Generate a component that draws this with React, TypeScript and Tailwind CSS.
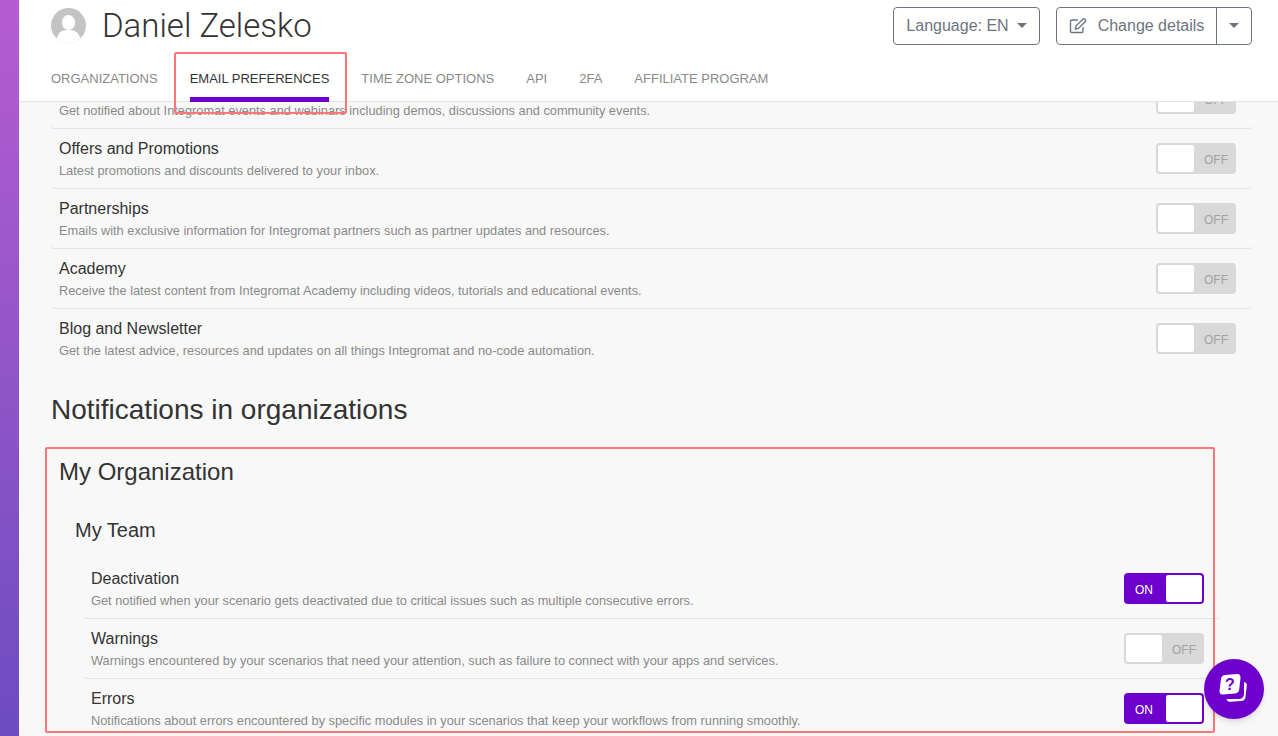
const tabs = ['ORGANIZATIONS', 'EMAIL PREFERENCES', 'TIME ZONE OPTIONS', 'API', '2FA', 'AFFILIATE PROGRAM'];

const generalRows = [
  { title: 'Events and Webinars', text: 'Get notified about Integromat events and webinars including demos, discussions and community events.' },
  { title: 'Offers and Promotions', text: 'Latest promotions and discounts delivered to your inbox.' },
  { title: 'Partnerships', text: 'Emails with exclusive information for Integromat partners such as partner updates and resources.' },
  { title: 'Academy', text: 'Receive the latest content from Integromat Academy including videos, tutorials and educational events.' },
  { title: 'Blog and Newsletter', text: 'Get the latest advice, resources and updates on all things Integromat and no-code automation.' },
];

const teamRows = [
  { title: 'Deactivation', text: 'Get notified when your scenario gets deactivated due to critical issues such as multiple consecutive errors.', on: true },
  { title: 'Warnings', text: 'Warnings encountered by your scenarios that need your attention, such as failure to connect with your apps and services.', on: false },
  { title: 'Errors', text: 'Notifications about errors encountered by specific modules in your scenarios that keep your workflows from running smoothly.', on: true },
];

function Toggle({ on }: { on: boolean }) {
  if (on) {
    return (
      <div className="flex h-[31px] w-[80px] shrink-0 rounded-[4px] border-2 border-[#6d00cc] bg-[#6d00cc]">
        <div className="flex w-[40px] items-center justify-center pr-[4px] pt-[3px] text-[12px] text-white">ON</div>
        <div className="flex-1 rounded-[2px] bg-white" />
      </div>
    );
  }
  return (
    <div className="flex h-[31px] w-[80px] shrink-0 rounded-[4px] border-2 border-[#d9d9d9] bg-[#d9d9d9]">
      <div className="w-[36px] rounded-[2px] bg-white" />
      <div className="flex flex-1 items-center justify-center pl-[4px] pt-[3px] text-[12px] text-[#a3a3a3]">OFF</div>
    </div>
  );
}

function Row({ title, text, on, last }: { title: string; text: string; on: boolean; last?: boolean }) {
  return (
    <div className={`flex h-[60px] items-center justify-between rounded-b-[4px] border-b pl-2 pr-4 ${last ? 'border-transparent' : 'border-[#e3e3e3]'}`}>
      <div className="pt-[2px]">
        <div className="text-[16px] leading-[20px] text-[#333333]">{title}</div>
        <div className="mt-[3px] text-[12.8px] leading-[18px] text-[#8a8a8a]">{text}</div>
      </div>
      <Toggle on={on} />
    </div>
  );
}

function Caret() {
  return <span className="inline-block h-0 w-0 border-x-[5px] border-t-[5px] border-x-transparent border-t-[#6c757d]" />;
}

export default function App() {
  return (
    <div className="relative flex h-[736px] w-[1278px] overflow-hidden bg-[#f8f8f8] font-['Liberation_Sans',Arial,sans-serif]">
      {/* Sidebar strip */}
      <div className="h-full w-[19px] shrink-0 bg-gradient-to-b from-[#b65cd0] to-[#6c4cc0]" />

      <div className="flex min-w-0 flex-1 flex-col">
        {/* Header */}
        <header className="relative z-10 h-[102px] shrink-0 border-b border-[#e3e3e3] bg-white pl-[32px] pr-[26px]">
          <div className="flex h-[51px] items-center justify-between">
            <div className="flex items-center gap-[16px]">
              <div className="relative h-[35px] w-[35px] overflow-hidden rounded-full bg-[#c4c4c4]">
                <div className="absolute left-[11px] top-[7px] h-[15px] w-[13px] rounded-full bg-white" />
                <div className="absolute left-[6px] top-[22px] h-[18px] w-[23px] rounded-full bg-white" />
              </div>
              <h1 className="font-['Roboto',sans-serif] text-[33px] font-light leading-[40px] text-[#333333]">Daniel Zelesko</h1>
            </div>
            <div className="flex items-center gap-[16px] text-[16px] text-[#6c757d]">
              <button className="flex h-[38px] w-[147px] items-center justify-center gap-[8px] rounded-[4px] border border-[#6c757d]">
                Language: EN <Caret />
              </button>
              <div className="flex h-[38px] w-[196px] rounded-[4px] border border-[#6c757d]">
                <button className="flex flex-1 items-center justify-center gap-[11px] border-r border-[#6c757d]">
                  <svg width="18" height="17" viewBox="0 0 18 17" fill="none" stroke="#6c757d" strokeWidth="1.4">
                    <path d="M14 10v4.2a1.3 1.3 0 0 1-1.3 1.3H2.8a1.3 1.3 0 0 1-1.3-1.3V4.3A1.3 1.3 0 0 1 2.8 3H9" />
                    <path d="M7 9l-.6 3 3-.6 7-7a1.2 1.2 0 0 0 0-1.7l-.7-.7a1.2 1.2 0 0 0-1.7 0z" />
                  </svg>
                  Change details
                </button>
                <button className="flex w-[34px] items-center justify-center"><Caret /></button>
              </div>
            </div>
          </div>
          <nav className="flex h-[51px] gap-[32px] text-[13px]">
            {tabs.map((tab) => (
              <div key={tab} className={`relative flex h-full items-center pt-[5px] ${tab === 'EMAIL PREFERENCES' ? 'text-[#333333]' : 'text-[#8a8a8a]'}`}>
                {tab}
                {tab === 'EMAIL PREFERENCES' && <div className="absolute bottom-0 left-0 h-[5px] w-full bg-[#6d00cc]" />}
              </div>
            ))}
          </nav>
        </header>

        {/* Scrolled content */}
        <main className="min-h-0 flex-1 overflow-hidden pl-[32px] pr-[26px]">
          <div className="-mt-[33px]">
            {generalRows.map((row, i) => (
              <Row key={row.title} {...row} on={false} last={i === generalRows.length - 1} />
            ))}
            <h2 className="mt-[20px] text-[28px] leading-[42px] text-[#333333]">Notifications in organizations</h2>
            <div className="ml-[8px] mt-[23px]">
              <h3 className="text-[24px] leading-[36px] text-[#333333]">My Organization</h3>
              <div className="ml-[16px] mt-[25px]">
                <h4 className="text-[20px] leading-[30px] text-[#333333]">My Team</h4>
                <div className="ml-[8px] mt-[14px] w-[1137px]">
                  {teamRows.map((row, i) => (
                    <Row key={row.title} {...row} last={i === teamRows.length - 1} />
                  ))}
                </div>
              </div>
            </div>
          </div>
        </main>
      </div>

      {/* Annotation boxes */}
      <div className="pointer-events-none absolute left-[174px] top-[52px] z-20 h-[62px] w-[173px] rounded-[2px] border-2 border-[#ff7676]" />
      <div className="pointer-events-none absolute left-[45px] top-[447px] z-20 h-[286px] w-[1170px] rounded-[2px] border-2 border-[#ff7676]" />

      {/* Help bubble */}
      <div className="absolute left-[1204px] top-[659px] z-30 flex h-[60px] w-[60px] items-center justify-center rounded-full bg-[#6d00cc] shadow-md">
        <svg width="32" height="32" viewBox="0 0 32 32">
          <path d="M26 9c2 .3 3 1.500 2.800 3.500l-1.300 11.500c-.3 2.500-1.800 3.800-4 4l-11 .8c-2 .1-3.500-.8-4-2.800h12c3.500 0 5.200-1.800 5.500-4.500z" fill="#fff" />
          <path d="M7 2l12-1c2.500-.2 3.800 1.500 3.500 4l-1.300 11.500c-.3 2.200-1.700 3.800-4 4L5 21.500c-2.500.2-3.800-1.500-3.500-4L3 6c.3-2.500 1.700-3.800 4-4z" fill="#fff" />
          <text x="12" y="17" textAnchor="middle" fontSize="16" fontWeight="700" fill="#6d00cc" fontFamily="Liberation Sans">?</text>
        </svg>
      </div>
    </div>
  );
}
